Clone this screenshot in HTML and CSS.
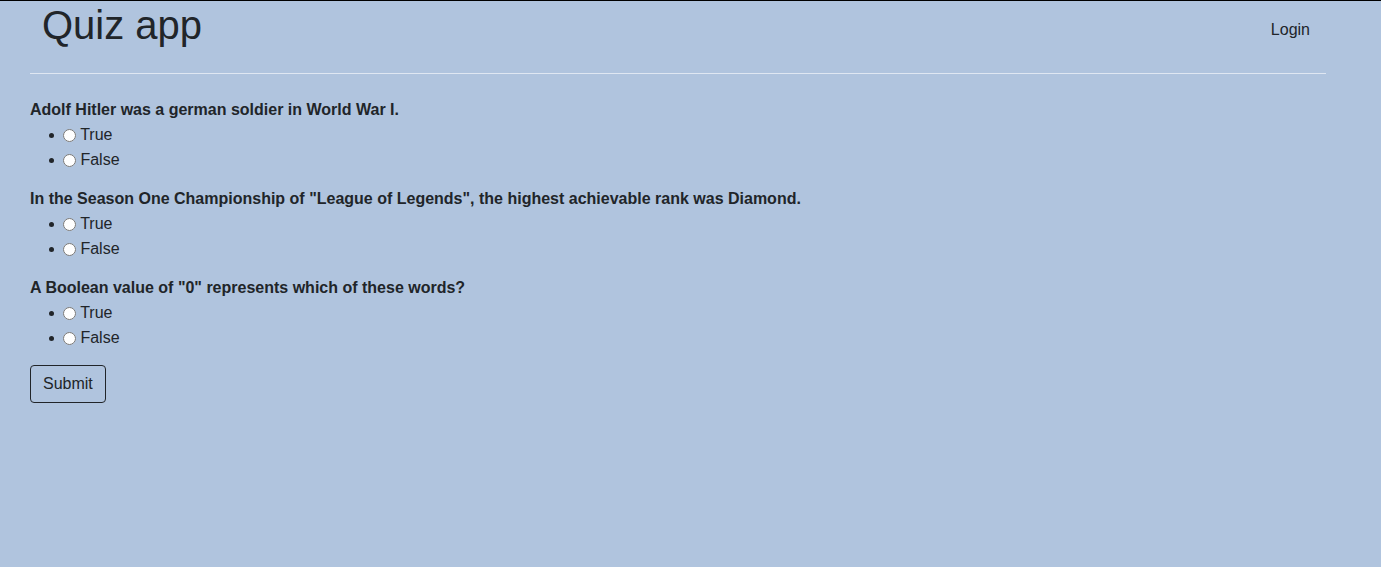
FILE: index.html
```html
<!DOCTYPE html>
<html lang="en">
<head>
<meta charset="utf-8">
<title>Quiz app</title>
<link rel="stylesheet" href="styles.css">
</head>
<body>
<div class="page">
  <header class="header">
    <h1 class="brand">Quiz app</h1>
    <a class="nav-link" href="#">Login</a>
  </header>
  <hr class="divider">
  <form class="quiz">
    <div class="question">
      <div class="question-text">Adolf Hitler was a german soldier in World War I.</div>
      <ul class="answers">
        <li><label><input type="radio" name="q1"> True</label></li>
        <li><label><input type="radio" name="q1"> False</label></li>
      </ul>
    </div>
    <div class="question">
      <div class="question-text">In the Season One Championship of "League of Legends", the highest achievable rank was Diamond.</div>
      <ul class="answers">
        <li><label><input type="radio" name="q2"> True</label></li>
        <li><label><input type="radio" name="q2"> False</label></li>
      </ul>
    </div>
    <div class="question">
      <div class="question-text">A Boolean value of "0" represents which of these words?</div>
      <ul class="answers">
        <li><label><input type="radio" name="q3"> True</label></li>
        <li><label><input type="radio" name="q3"> False</label></li>
      </ul>
    </div>
    <button type="button" class="btn">Submit</button>
  </form>
</div>
</body>
</html>
```

FILE: styles.css
```css
html, body {
  margin: 0;
  padding: 0;
}
body {
  background: #b0c4de;
  color: #212529;
  font-family: "Liberation Sans", Arial, sans-serif;
  font-size: 16px;
  line-height: 24px;
  border-top: 1px solid #000;
  min-height: 566px;
}
.page {
  padding: 0 55px 0 30px;
}
.header {
  display: flex;
  justify-content: space-between;
  align-items: flex-start;
}
.brand {
  margin: 0;
  padding-left: 12px;
  font-size: 40px;
  font-weight: 400;
  line-height: 48px;
}
.nav-link {
  color: #212529;
  text-decoration: none;
  padding: 17px 16px 0;
}
.divider {
  margin: 24px 0;
  border: 0;
  border-top: 1px solid rgba(255, 255, 255, 0.6);
  height: 0;
}
.quiz {
  margin: 0;
}
.question-text {
  font-weight: 700;
}
.answers {
  margin: 0 0 15px;
  padding-left: 35px;
}
.answers li {
  line-height: 25px;
}
.answers input {
  margin: 0 0 0 -2px;
  vertical-align: middle;
}
.btn {
  font-family: inherit;
  font-size: 16px;
  line-height: 24px;
  color: #212529;
  background: transparent;
  border: 1px solid #212529;
  border-radius: 4px;
  padding: 6px 12px;
  margin: 0;
}
```
